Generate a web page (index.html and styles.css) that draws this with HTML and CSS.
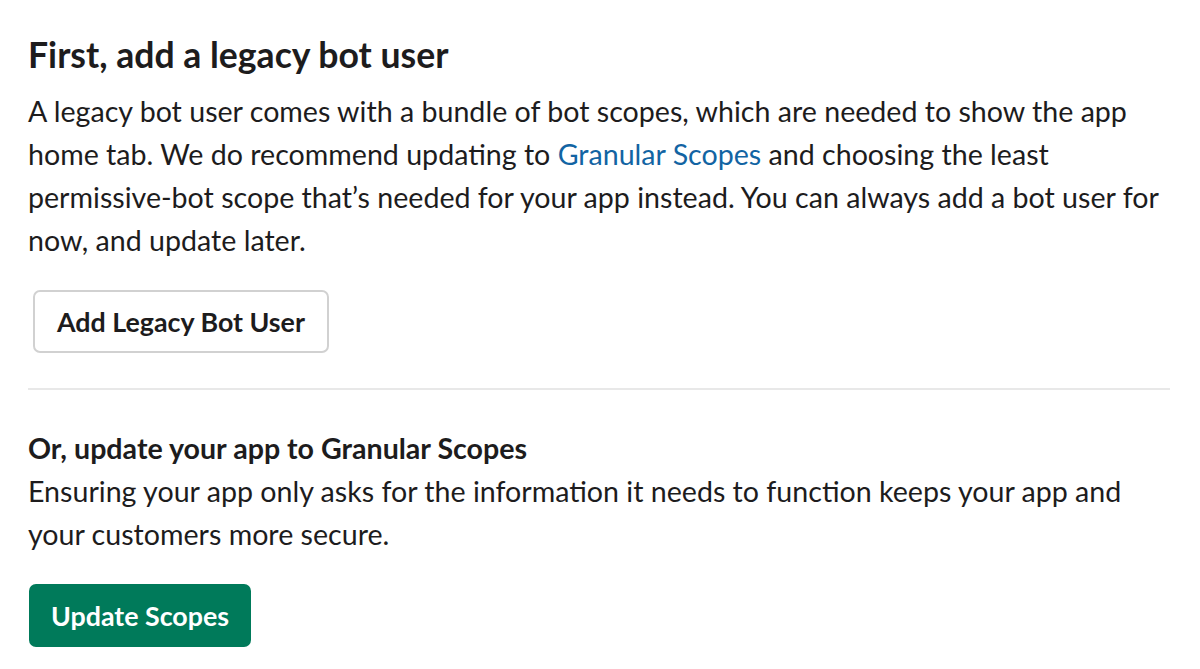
FILE: index.html
```html
<!DOCTYPE html>
<html lang="en">
<head>
  <meta charset="UTF-8">
  <title>App Home</title>
  <link rel="stylesheet" href="styles.css">
</head>
<body>
  <div class="page">
    <section class="block">
      <h2 class="title">First, add a legacy bot user</h2>
      <p class="text">A legacy bot user comes with a bundle of bot scopes, which are needed to show the app home tab. We do recommend updating to <a href="#">Granular Scopes</a> and choosing the least permissive-bot scope that’s needed for your app instead. You can always add a bot user for now, and update later.</p>
      <button class="btn btn-outline">Add Legacy Bot User</button>
    </section>

    <hr class="divider">

    <section class="block">
      <h3 class="subtitle">Or, update your app to Granular Scopes</h3>
      <p class="text">Ensuring your app only asks for the information it needs to function keeps your app and your customers more secure.</p>
      <button class="btn btn-primary">Update Scopes</button>
    </section>
  </div>
</body>
</html>
```

FILE: styles.css
```css
body {
  margin: 0;
  font-family: Lato, "Noto Sans", sans-serif;
  color: #1d1c1d;
  background: #fff;
}
.page {
  padding: 28px 30px 0 28px;
}
.title {
  font-size: 35.6px;
  font-weight: 700;
  line-height: 54px;
  margin: 0 0 8px;
}
.subtitle {
  font-size: 28.6px;
  font-weight: 700;
  line-height: 43px;
  margin: 0;
}
.text {
  font-size: 28.6px;
  line-height: 43px;
  margin: 0 0 28px;
}
.text a {
  color: #1264a3;
  text-decoration: none;
}
.btn {
  font-family: Lato, "Noto Sans", sans-serif;
  font-size: 26.8px;
  font-weight: 700;
  height: 63px;
  padding: 0 22px;
  border-radius: 7px;
  cursor: pointer;
}
.btn-outline {
  margin-left: 5px;
  background: #fff;
  color: #1d1c1d;
  border: 2px solid #d1d1d1;
}
.btn-primary {
  margin-left: 1px;
  background: #007a5a;
  color: #fff;
  border: none;
}
.divider {
  border: none;
  border-top: 2px solid #e8e8e8;
  margin: 35px 0 37px;
}
```
